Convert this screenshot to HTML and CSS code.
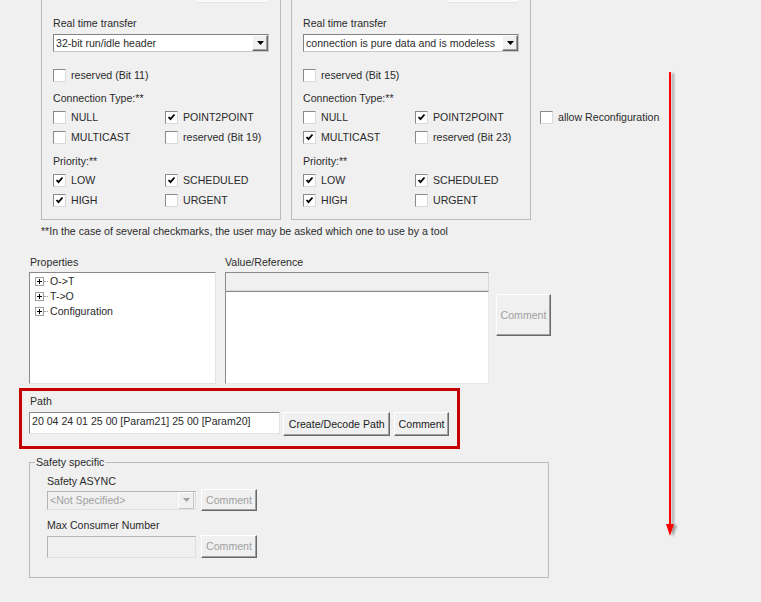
FILE: index.html
```html
<!DOCTYPE html>
<html>
<head>
<meta charset="utf-8">
<link rel="stylesheet" href="styles.css">
</head>
<body>
<div class="top-row">
  <div class="group">
    <div class="stub"></div>
    <div class="lbl lbl-rt">Real time transfer</div>
    <div class="combo">
      <span class="combo-text">32-bit run/idle header</span>
      <span class="combo-btn"><svg width="7" height="4" viewBox="0 0 7 4"><polygon points="0,0 7,0 3.5,4" fill="#000"/></svg></span>
    </div>
    <div class="cb-row cb-first"><span class="cb"></span>reserved (Bit 11)</div>
    <div class="lbl lbl-sec">Connection Type:**</div>
    <div class="cb-grid">
      <div class="cb-row"><span class="cb"></span>NULL</div>
      <div class="cb-row"><span class="cb on"><svg width="11" height="11" viewBox="0 0 11 11"><polyline points="2.5,5 4.5,7.2 8.5,2.5" fill="none" stroke="#000" stroke-width="1.8"/></svg></span>POINT2POINT</div>
      <div class="cb-row"><span class="cb"></span>MULTICAST</div>
      <div class="cb-row"><span class="cb"></span>reserved (Bit 19)</div>
    </div>
    <div class="lbl lbl-pri">Priority:**</div>
    <div class="cb-grid">
      <div class="cb-row"><span class="cb on"><svg width="11" height="11" viewBox="0 0 11 11"><polyline points="2.5,5 4.5,7.2 8.5,2.5" fill="none" stroke="#000" stroke-width="1.8"/></svg></span>LOW</div>
      <div class="cb-row"><span class="cb on"><svg width="11" height="11" viewBox="0 0 11 11"><polyline points="2.5,5 4.5,7.2 8.5,2.5" fill="none" stroke="#000" stroke-width="1.8"/></svg></span>SCHEDULED</div>
      <div class="cb-row"><span class="cb on"><svg width="11" height="11" viewBox="0 0 11 11"><polyline points="2.5,5 4.5,7.2 8.5,2.5" fill="none" stroke="#000" stroke-width="1.8"/></svg></span>HIGH</div>
      <div class="cb-row"><span class="cb"></span>URGENT</div>
    </div>
  </div>
  <div class="group group-right">
    <div class="stub"></div>
    <div class="lbl lbl-rt">Real time transfer</div>
    <div class="combo">
      <span class="combo-text">connection is pure data and is modeless</span>
      <span class="combo-btn"><svg width="7" height="4" viewBox="0 0 7 4"><polygon points="0,0 7,0 3.5,4" fill="#000"/></svg></span>
    </div>
    <div class="cb-row cb-first"><span class="cb"></span>reserved (Bit 15)</div>
    <div class="lbl lbl-sec">Connection Type:**</div>
    <div class="cb-grid">
      <div class="cb-row"><span class="cb"></span>NULL</div>
      <div class="cb-row"><span class="cb on"><svg width="11" height="11" viewBox="0 0 11 11"><polyline points="2.5,5 4.5,7.2 8.5,2.5" fill="none" stroke="#000" stroke-width="1.8"/></svg></span>POINT2POINT</div>
      <div class="cb-row"><span class="cb on"><svg width="11" height="11" viewBox="0 0 11 11"><polyline points="2.5,5 4.5,7.2 8.5,2.5" fill="none" stroke="#000" stroke-width="1.8"/></svg></span>MULTICAST</div>
      <div class="cb-row"><span class="cb"></span>reserved (Bit 23)</div>
    </div>
    <div class="lbl lbl-pri">Priority:**</div>
    <div class="cb-grid">
      <div class="cb-row"><span class="cb on"><svg width="11" height="11" viewBox="0 0 11 11"><polyline points="2.5,5 4.5,7.2 8.5,2.5" fill="none" stroke="#000" stroke-width="1.8"/></svg></span>LOW</div>
      <div class="cb-row"><span class="cb on"><svg width="11" height="11" viewBox="0 0 11 11"><polyline points="2.5,5 4.5,7.2 8.5,2.5" fill="none" stroke="#000" stroke-width="1.8"/></svg></span>SCHEDULED</div>
      <div class="cb-row"><span class="cb on"><svg width="11" height="11" viewBox="0 0 11 11"><polyline points="2.5,5 4.5,7.2 8.5,2.5" fill="none" stroke="#000" stroke-width="1.8"/></svg></span>HIGH</div>
      <div class="cb-row"><span class="cb"></span>URGENT</div>
    </div>
  </div>
  <div class="cb-row reconf"><span class="cb"></span>allow Reconfiguration</div>
</div>

<div class="footnote">**In the case of several checkmarks, the user may be asked which one to use by a tool</div>

<div class="props">
  <div class="props-col">
    <div class="lbl props-lbl">Properties</div>
    <div class="tree">
      <div class="tree-row"><span class="plus"></span><span class="dots"></span>O-&gt;T</div>
      <div class="tree-row"><span class="plus"></span><span class="dots"></span>T-&gt;O</div>
      <div class="tree-row"><span class="plus"></span><span class="dots"></span>Configuration</div>
    </div>
  </div>
  <div class="value-col">
    <div class="lbl">Value/Reference</div>
    <div class="value-edit"></div>
    <div class="value-area"></div>
  </div>
  <div class="btn disabled value-btn">Comment</div>
</div>

<div class="path-box">
  <div class="lbl path-lbl">Path</div>
  <div class="path-row">
    <div class="path-input">20 04 24 01 25 00 [Param21] 25 00 [Param20]</div>
    <div class="btn path-btn1">Create/Decode Path</div>
    <div class="btn path-btn2">Comment</div>
  </div>
</div>

<fieldset class="safety">
  <legend>Safety specific</legend>
  <div class="safety-inner">
    <div class="lbl">Safety ASYNC</div>
    <div class="safety-row row1">
      <div class="combo combo-dis">
        <span class="combo-text">&lt;Not Specified&gt;</span>
        <span class="combo-btn"><svg width="7" height="4" viewBox="0 0 7 4"><polygon points="0,0 7,0 3.5,4" fill="#a0a0a0"/></svg></span>
      </div>
      <div class="btn disabled safety-btn">Comment</div>
    </div>
    <div class="lbl lbl-max">Max Consumer Number</div>
    <div class="safety-row row2">
      <div class="dis-input"></div>
      <div class="btn disabled safety-btn">Comment</div>
    </div>
  </div>
</fieldset>

<svg class="arrow" width="24" height="476" viewBox="0 0 24 476">
  <defs>
    <filter id="sh" x="-50%" y="-5%" width="200%" height="110%">
      <feGaussianBlur in="SourceAlpha" stdDeviation="1.2"/>
      <feOffset dx="3" dy="1" result="b"/>
      <feComponentTransfer><feFuncA type="linear" slope="0.35"/></feComponentTransfer>
      <feMerge><feMergeNode/><feMergeNode in="SourceGraphic"/></feMerge>
    </filter>
  </defs>
  <g filter="url(#sh)">
    <rect x="5" y="2" width="2" height="454" fill="#ff0000"/>
    <polygon points="2,454 10,454 6,466" fill="#ff0000"/>
  </g>
</svg>
</body>
</html>
```

FILE: styles.css
```css
html, body {
  margin: 0;
  padding: 0;
}
body {
  background: #f0f0f0;
  font-family: "Liberation Sans", Arial, sans-serif;
  font-size: 10.6px;
  line-height: 13px;
  color: #2b2b2b;
  width: 761px;
  height: 602px;
  overflow: hidden;
  position: relative;
}

.lbl {
  height: 13px;
  white-space: nowrap;
}

/* top group boxes */
.top-row {
  display: flex;
  align-items: flex-start;
  padding-left: 41px;
}
.group {
  width: 240px;
  box-sizing: border-box;
  border: 1px solid #bcbcbc;
  border-top: none;
  padding: 0 11px 9px 11px;
  display: flex;
  flex-direction: column;
}
.group-right {
  margin-left: 10px;
}
.stub {
  align-self: flex-end;
  width: 71px;
  height: 2px;
  background: #fbfbfb;
  border-bottom: 1px solid #e4e4e4;
  margin-right: 1px;
}
.lbl-rt {
  margin-top: 14px;
}
.lbl-sec {
  margin-top: 6px;
  height: 14px;
  line-height: 14px;
}
.lbl-pri {
  margin-top: 7px;
  height: 14px;
  line-height: 14px;
}

.combo {
  margin-top: 4px;
  height: 18px;
  box-sizing: border-box;
  display: flex;
  align-items: center;
  background: #fff;
  border: 1px solid;
  border-color: #828282 #c8c8c8 #c8c8c8 #828282;
}
.combo-text {
  flex: 1;
  padding-left: 2px;
  white-space: nowrap;
  overflow: hidden;
}
.combo-btn {
  width: 16px;
  height: 16px;
  box-sizing: border-box;
  background: #f0f0f0;
  border: 1px solid;
  border-color: #fff #696969 #696969 #fff;
  box-shadow: inset -1px -1px 0 #a0a0a0;
  display: flex;
  align-items: center;
  justify-content: center;
  flex: none;
}

.cb-row {
  display: flex;
  align-items: center;
  height: 20px;
  white-space: nowrap;
}
.cb-first {
  margin-top: 13px;
}
.cb {
  width: 13px;
  height: 13px;
  box-sizing: border-box;
  background: #fff;
  border: 1px solid;
  border-color: #8a8a8a #dadada #dadada #8a8a8a;
  margin-right: 5px;
  flex: none;
  display: flex;
}
.cb svg {
  display: block;
}
.cb-grid {
  margin-top: 2px;
  display: grid;
  grid-template-columns: 112px 1fr;
}
.reconf {
  margin-left: 9px;
  margin-top: 107px;
}

.footnote {
  margin-top: 5px;
  padding-left: 41px;
  height: 13px;
  white-space: nowrap;
}

/* properties */
.props {
  display: flex;
  align-items: flex-start;
  padding-left: 29px;
  margin-top: 18px;
}
.props-col {
  width: 187px;
}
.props-lbl {
  padding-left: 1px;
}
.tree {
  margin-top: 3px;
  height: 112px;
  box-sizing: border-box;
  background: #fff;
  border: 1px solid;
  border-color: #8a8a8a #e3e3e3 #e3e3e3 #8a8a8a;
  padding: 1px 0 0 5px;
}
.tree-row {
  display: flex;
  align-items: center;
  height: 15px;
  position: relative;
}
.plus {
  width: 9px;
  height: 9px;
  box-sizing: border-box;
  border: 1px solid #a0a0a0;
  background: #fff;
  position: relative;
  flex: none;
}
.plus::before {
  content: "";
  position: absolute;
  left: 1px;
  top: 3px;
  width: 5px;
  height: 1px;
  background: #000;
}
.plus::after {
  content: "";
  position: absolute;
  left: 3px;
  top: 1px;
  width: 1px;
  height: 5px;
  background: #000;
}
.dots {
  width: 4px;
  margin: 0 2px 0 0;
  border-top: 1px dotted #a0a0a0;
  flex: none;
}
.value-col {
  margin-left: 9px;
  width: 264px;
}
.value-edit {
  margin-top: 3px;
  height: 19px;
  box-sizing: border-box;
  background: #f0f0f0;
  border: 1px solid;
  border-color: #8a8a8a #d8d8d8 #d8d8d8 #8a8a8a;
}
.value-area {
  height: 93px;
  box-sizing: border-box;
  background: #fff;
  border: 1px solid;
  border-color: #8a8a8a #e8e8e8 #e8e8e8 #8a8a8a;
}

.btn {
  box-sizing: border-box;
  background: #f0f0f0;
  border: 1px solid;
  border-color: #fff #696969 #696969 #fff;
  box-shadow: inset -1px -1px 0 #a0a0a0;
  display: flex;
  align-items: center;
  justify-content: center;
  color: #1a1a1a;
  white-space: nowrap;
}
.btn.disabled {
  color: #a0a0a0;
}
.value-btn {
  margin-left: 7px;
  margin-top: 38px;
  width: 55px;
  height: 42px;
}

/* path */
.path-box {
  margin: 4px 0 0 19px;
  width: 441px;
  box-sizing: border-box;
  border: 3px solid #c40000;
  padding: 4px 8px 10px 7px;
}
.path-lbl {
  padding-left: 1px;
}
.path-row {
  margin-top: 4px;
  display: flex;
  align-items: flex-start;
}
.path-input {
  width: 252px;
  height: 22px;
  box-sizing: border-box;
  background: #fff;
  border: 1px solid;
  border-color: #8a8a8a #e3e3e3 #e3e3e3 #8a8a8a;
  padding: 2px 0 0 2px;
  white-space: nowrap;
  overflow: hidden;
}
.path-btn1 {
  margin-left: 3px;
  width: 107px;
  height: 24px;
}
.path-btn2 {
  margin-left: 4px;
  width: 55px;
  height: 24px;
}

/* safety */
.safety {
  margin: 7px 0 0 29px;
  width: 520px;
  height: 122px;
  box-sizing: border-box;
  border: 1px solid #bcbcbc;
  padding: 0;
  min-width: 0;
}
.safety legend {
  margin-left: 5px;
  padding: 0 1px;
  line-height: 13px;
  height: 13px;
}
.safety-inner {
  padding: 6px 0 0 17px;
}
.safety-row {
  display: flex;
  align-items: center;
}
.row1 {
  margin-top: 1px;
}
.row2 {
  margin-top: 3px;
}
.lbl-max {
  margin-top: 8px;
}
.combo-dis {
  margin-top: 0;
  width: 149px;
  height: 19px;
  background: #f0f0f0;
  border-color: #b4b4b4 #e0e0e0 #e0e0e0 #b4b4b4;
  color: #a0a0a0;
}
.combo-dis .combo-btn {
  width: 16px;
  height: 17px;
  border-color: #fff #c8c8c8 #c8c8c8 #fff;
  box-shadow: none;
  margin-right: 1px;
}
.dis-input {
  width: 149px;
  height: 22px;
  box-sizing: border-box;
  background: #f0f0f0;
  border: 1px solid;
  border-color: #b4b4b4 #e0e0e0 #e0e0e0 #b4b4b4;
}
.safety-btn {
  margin-left: 5px;
  width: 56px;
  height: 22px;
}
.row2 .safety-btn {
  height: 23px;
}

.arrow {
  position: absolute;
  left: 664px;
  top: 70px;
}
```
